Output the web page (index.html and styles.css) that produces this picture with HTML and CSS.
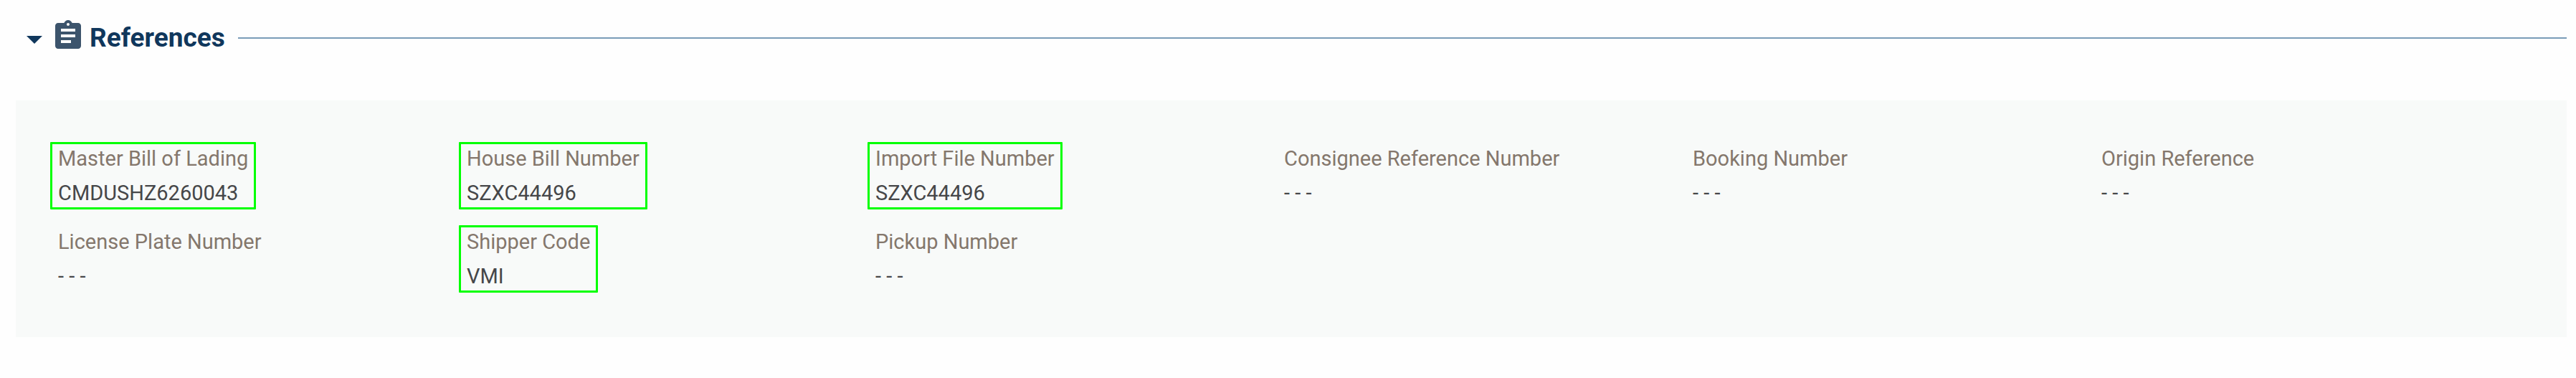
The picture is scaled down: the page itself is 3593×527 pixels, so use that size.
FILE: index.html
```html
<!DOCTYPE html>
<html lang="en">
<head>
<meta charset="utf-8">
<title>References</title>
<link rel="stylesheet" href="styles.css">
</head>
<body>
<section class="section">
  <header class="section-header">
    <button class="toggle" type="button" aria-expanded="true" aria-controls="references" aria-label="Collapse References">
      <svg class="caret" viewBox="0 0 22 11" aria-hidden="true"><path d="M0 0h22L11 11z"/></svg>
    </button>
    <svg class="section-icon" viewBox="0 0 24 24" aria-hidden="true"><path d="M19 3h-4.180C14.400 1.840 13.300 1 12 1c-1.300 0-2.400.84-2.820 2H5c-1.100 0-2 .9-2 2v14c0 1.100.9 2 2 2h14c1.100 0 2-.9 2-2V5c0-1.100-.9-2-2-2zm-7 0c.55 0 1 .45 1 1s-.45 1-1 1-1-.45-1-1 .45-1 1-1zm2 14H7v-2h7v2zm3-4H7v-2h10v2zm0-4H7V7h10v2z"/></svg>
    <h2 class="section-title">References</h2>
    <div class="rule"></div>
  </header>
  <dl class="panel" id="references">
    <div class="field highlighted"><dt>Master Bill of Lading</dt><dd>CMDUSHZ6260043</dd></div>
    <div class="field highlighted"><dt>House Bill Number</dt><dd>SZXC44496</dd></div>
    <div class="field highlighted"><dt>Import File Number</dt><dd>SZXC44496</dd></div>
    <div class="field"><dt>Consignee Reference Number</dt><dd>- - -</dd></div>
    <div class="field"><dt>Booking Number</dt><dd>- - -</dd></div>
    <div class="field"><dt>Origin Reference</dt><dd>- - -</dd></div>
    <div class="field"><dt>License Plate Number</dt><dd>- - -</dd></div>
    <div class="field highlighted"><dt>Shipper Code</dt><dd>VMI</dd></div>
    <div class="field"><dt>Pickup Number</dt><dd>- - -</dd></div>
  </dl>
</section>
</body>
</html>
```
FILE: styles.css
```css
* {
  box-sizing: border-box;
}

body {
  margin: 0;
  background: #fefefe;
  color: #464749;
  font-family: Roboto, "Liberation Sans", sans-serif;
}

.section {
  padding: 23px 13px 57px 22px;
}

.section-header {
  display: flex;
  align-items: center;
  height: 60px;
  padding-left: 15px;
}

.toggle {
  display: flex;
  margin: 5px 12px 0 0;
  padding: 0;
  border: 0;
  background: none;
  cursor: pointer;
}

.caret {
  width: 22px;
  height: 11px;
  fill: #10375c;
}

.section-icon {
  width: 48px;
  height: 48px;
  margin: 0 6px 6px 0;
  fill: #3c546c;
}

.section-title {
  margin: 0 18px 0 0;
  color: #10375c;
  font-size: 37px;
  font-weight: 700;
  line-height: 48px;
}

.rule {
  flex: 1;
  height: 2px;
  background: #7a9cb8;
}

.panel {
  display: grid;
  grid-template-columns: repeat(6, 1fr);
  row-gap: 22px;
  margin: 57px 0 0;
  padding: 58px 90px 62px 48px;
  background: #f8faf9;
}

.field {
  display: grid;
  row-gap: 8px;
  justify-self: start;
  padding: 0 8px;
  border: 3px solid transparent;
  font-size: 29px;
  line-height: 40px;
}

.highlighted {
  border-color: #00ff00;
  border-radius: 1px;
}

.field dt {
  color: #84776c;
}

.field dd {
  margin: 0;
}
```
